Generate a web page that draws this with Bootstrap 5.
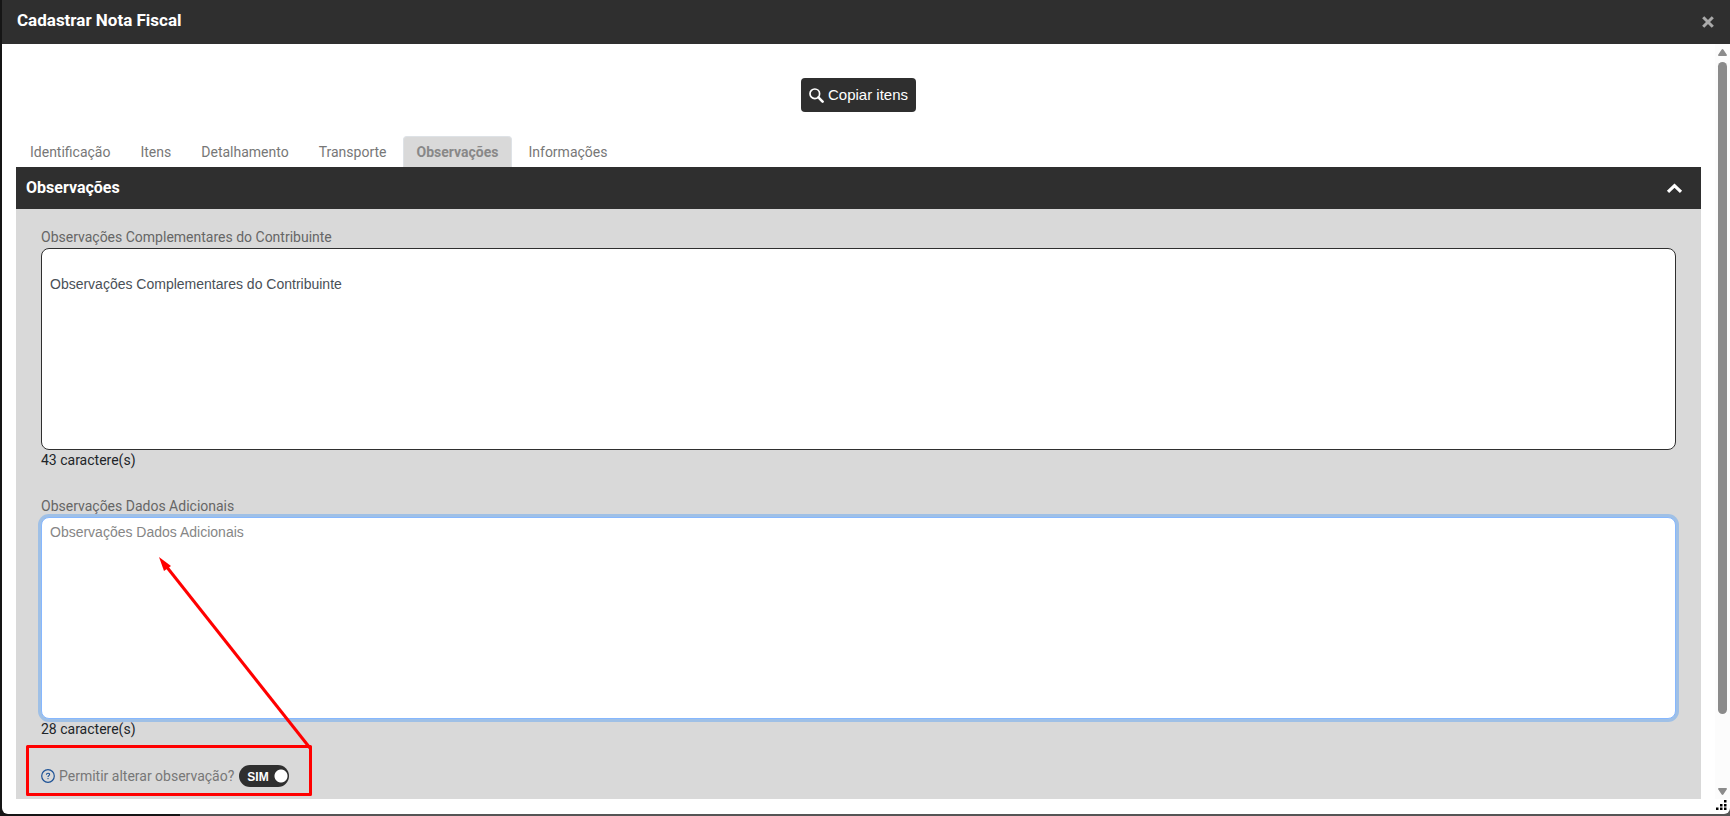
<!DOCTYPE html>
<html lang="pt-BR">
<head>
<meta charset="utf-8">
<meta name="viewport" content="width=device-width, initial-scale=1">
<title>Cadastrar Nota Fiscal</title>
<link href="https://cdn.jsdelivr.net/npm/bootstrap@5.3.0/dist/css/bootstrap.min.css" rel="stylesheet">
<style>
  body { font-family: Roboto, "Liberation Sans", sans-serif; font-size: 14px; line-height: 20px; color: #212529; background: linear-gradient(90deg, #151515 180px, #555 180px); }
  .dialog-window { margin: 0 0 2px 2px; background: #fff; border-radius: 0 0 6px 6px; min-height: 0; }
  .title-bar { height: 44px; padding: 0 16px 4px 15px; background: #2f2f2f; color: #fff; }
  .title-bar h1 { font-size: 17px; line-height: 24px; font-weight: 700; }
  .icon-btn { border: 0; background: none; padding: 0; display: flex; color: #aaa; }
  .scroll-area { min-height: 0; }
  .page-content { padding: 34px 14px 0 14px; min-height: 0; min-width: 0; }
  .btn-copy { height: 34px; padding: 0 8px; border-radius: 4px; background: #2f2f2f; color: #fff; font-family: "Liberation Sans", sans-serif; font-size: 15px; line-height: 20px; gap: 4px; }
  .btn-copy:hover { background: #444; color: #fff; }
  .tab-row { margin-top: 24px; gap: 2px; border: 0; }
  .tab-row .nav-link { height: 31px; padding: 5px 13px; margin: 0; border-radius: 4px 4px 0 0; color: #777; }
  .tab-row .nav-link.active { background: #d9d9d9; border-color: #dee2e6; border-bottom-color: #d9d9d9; color: #888; font-weight: 700; }
  .section-bar { height: 42px; padding: 0 18px 0 10px; background: #2f2f2f; color: #fff; }
  .section-bar h2 { font-size: 16px; line-height: 24px; font-weight: 700; }
  .panel { background: #d9d9d9; padding: 18px 25px 0; }
  .field-label { color: #666; margin-bottom: 1px; }
  .note { display: block; height: 202px; padding: 4px 8px; border: 1px solid #2f2f2f; border-radius: 8px; resize: none; color: #495057; font-family: "Liberation Sans", sans-serif; font-size: 14px; line-height: 21px; }
  .note-active, .note-active:focus { border-color: #86b7fe; box-shadow: 0 0 0 3px #9fc0e6; color: #868686; }
  .note-group { margin-bottom: 26px; }
  .allow-row { margin-top: 26px; gap: 4px; color: #777; }
  .switch-box { width: 50px; height: 22px; margin-left: 1px; }
  .switch-box input { appearance: none; width: 50px; height: 22px; margin: 0; border-radius: 11px; background: radial-gradient(circle at 42px 11px, #fff 6px, #2f2f2f 7px); display: block; }
  .switch-box span { left: 8px; top: 2px; color: #fff; font: 700 12px/20px "Liberation Sans", sans-serif; pointer-events: none; }
  .callout-mark { left: 10px; top: 340px; pointer-events: none; }
  .scroll-track { width: 15px; background: #fcfcfc; padding: 5px 3px 4px; gap: 6px; }
  .scroll-thumb { width: 9px; border-radius: 5px; background: #8b8b8b; margin-bottom: 68px; }
  .bottom-strip { height: 15px; padding: 1px 3px 0; }
</style>
</head>
<body>
<div class="vh-100 d-flex flex-column overflow-hidden">
  <div class="dialog-window flex-fill d-flex flex-column overflow-hidden" role="dialog" aria-labelledby="dialog-title">
    <header class="title-bar d-flex align-items-center justify-content-between flex-shrink-0">
      <h1 id="dialog-title" class="m-0">Cadastrar Nota Fiscal</h1>
      <button type="button" class="icon-btn pt-1" aria-label="Fechar">
        <svg width="12" height="12" viewBox="0 0 12 12" stroke="currentColor" stroke-width="3"><path d="M1.2 1.2 10.8 10.8M10.8 1.2 1.2 10.8"/></svg>
      </button>
    </header>

    <div class="scroll-area flex-fill d-flex">
      <main class="page-content flex-fill d-flex flex-column overflow-hidden">
        <div class="text-center">
          <button type="button" class="btn btn-copy border-0 d-inline-flex align-items-center">
            <svg width="15" height="15" viewBox="0 0 15 15" fill="none" stroke="currentColor"><circle cx="5.8" cy="5.8" r="4.8" stroke-width="1.7"/><path d="M9.4 9.4 13.6 13.6" stroke-width="2.6" stroke-linecap="round"/></svg>
            Copiar itens
          </button>
        </div>

        <ul class="nav nav-tabs tab-row">
          <li class="nav-item"><a class="nav-link" href="#">Identificação</a></li>
          <li class="nav-item"><a class="nav-link" href="#">Itens</a></li>
          <li class="nav-item"><a class="nav-link" href="#">Detalhamento</a></li>
          <li class="nav-item"><a class="nav-link" href="#">Transporte</a></li>
          <li class="nav-item"><a class="nav-link active" aria-current="page" href="#">Observações</a></li>
          <li class="nav-item"><a class="nav-link" href="#">Informações</a></li>
        </ul>

        <div class="section-bar d-flex align-items-center justify-content-between flex-shrink-0">
          <h2 class="m-0">Observações</h2>
          <button type="button" class="icon-btn text-white" aria-label="Recolher">
            <svg width="17" height="12" viewBox="0 0 17 12" fill="none" stroke="currentColor" stroke-width="3.2"><path d="M2 9.8 8.5 3.6 15 9.8"/></svg>
          </button>
        </div>

        <section class="panel position-relative flex-fill">
          <div class="note-group">
            <label class="field-label d-block" for="obs-contribuinte">Observações Complementares do Contribuinte</label>
            <textarea id="obs-contribuinte" class="note w-100">

Observações Complementares do Contribuinte</textarea>
            <div>43 caractere(s)</div>
          </div>
          <div>
            <label class="field-label d-block" for="obs-adicionais">Observações Dados Adicionais</label>
            <textarea id="obs-adicionais" class="note note-active w-100">Observações Dados Adicionais</textarea>
            <div>28 caractere(s)</div>
          </div>
          <div class="allow-row d-flex align-items-center">
            <svg width="14" height="14" viewBox="0 0 14 14" fill="none" stroke="#1d5296"><circle cx="7" cy="7" r="6.3" stroke-width="1.2"/><path d="M5.4 5.7c0-2 3.2-1.9 3.200-.2C8.600 6.700 7 6.600 7 8" stroke-width="1.100"/><circle cx="7" cy="9.600" r=".7" fill="#1d5296" stroke="none"/></svg>
            <label for="permitir">Permitir alterar observação?</label>
            <div class="switch-box position-relative">
              <input type="checkbox" role="switch" id="permitir" checked>
              <span class="position-absolute">SIM</span>
            </div>
          </div>
          <svg class="callout-mark position-absolute" width="290" height="250" viewBox="0 0 290 250" fill="none" stroke="#f00" stroke-width="3" aria-hidden="true">
            <rect x="1.5" y="197.5" width="283" height="48" stroke-linejoin="round"/>
            <path d="M284 199 140 17"/>
            <path d="M133 8 145 17 138 22Z" fill="#f00" stroke="none"/>
          </svg>
        </section>
      </main>

      <div class="scroll-track d-flex flex-column align-items-center flex-shrink-0" aria-hidden="true">
        <svg class="flex-shrink-0" width="9" height="7" viewBox="0 0 9 7"><path d="M4.5 0Q5 0 5.5.8L9 6Q9 7 8 7H1Q0 7 0 6L3.5.8Q4 0 4.5 0Z" fill="#8b8b8b"/></svg>
        <div class="scroll-thumb flex-fill"></div>
        <svg class="flex-shrink-0" width="9" height="7" viewBox="0 0 9 7"><path d="M4.5 7Q5 7 5.5 6.2L9 1Q9 0 8 0H1Q0 0 0 1L3.5 6.2Q4 7 4.5 7Z" fill="#8b8b8b"/></svg>
      </div>
    </div>

    <div class="bottom-strip d-flex justify-content-end flex-shrink-0" aria-hidden="true">
      <svg width="11" height="10" viewBox="0 0 11 10" fill="#000"><path d="M8 0h2.500v2.500H8zM4 4h2.500v2.500H4zM8 4h2.500v2.500H8zM0 7.500h2.500V10H0zM4 7.500h2.500V10H4zM8 7.500h2.500V10H8z"/></svg>
    </div>
  </div>
</div>
<script src="https://cdn.jsdelivr.net/npm/bootstrap@5.3.0/dist/js/bootstrap.bundle.min.js"></script>
</body>
</html>
